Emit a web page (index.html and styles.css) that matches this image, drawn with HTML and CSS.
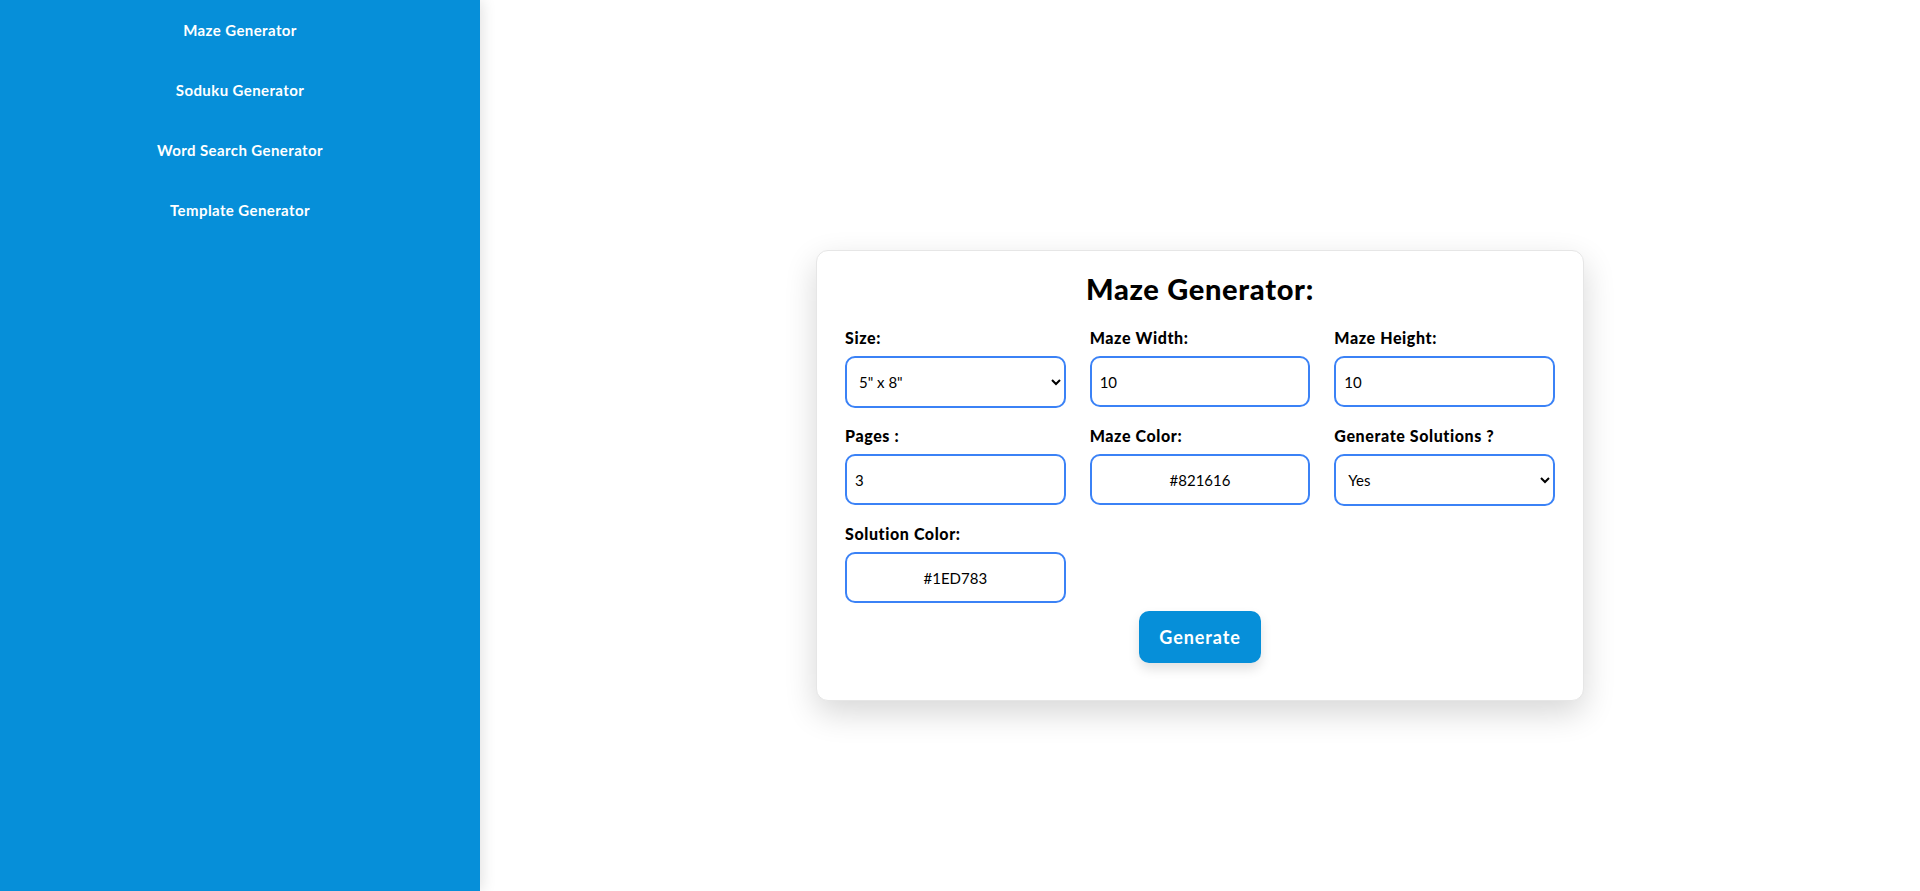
FILE: index.html
```html
<!DOCTYPE html>
<html lang="en">
<head>
<meta charset="utf-8">
<title>Maze Generator</title>
<link rel="stylesheet" href="styles.css">
</head>
<body>
<div class="app">
  <nav class="sidebar">
    <a class="nav-item" href="#">Maze Generator</a>
    <a class="nav-item" href="#">Soduku Generator</a>
    <a class="nav-item" href="#">Word Search Generator</a>
    <a class="nav-item" href="#">Template Generator</a>
  </nav>
  <main class="main">
    <form class="card">
      <h1 class="card-title">Maze Generator:</h1>
      <div class="grid">
        <div class="field">
          <label class="label">Size:</label>
          <select class="control select">
            <option>5" x 8"</option>
          </select>
        </div>
        <div class="field">
          <label class="label">Maze Width:</label>
          <input class="control" type="text" value="10">
        </div>
        <div class="field">
          <label class="label">Maze Height:</label>
          <input class="control" type="text" value="10">
        </div>
        <div class="field">
          <label class="label">Pages :</label>
          <input class="control" type="text" value="3">
        </div>
        <div class="field">
          <label class="label">Maze Color:</label>
          <input class="control center" type="text" value="#821616">
        </div>
        <div class="field">
          <label class="label">Generate Solutions ?</label>
          <select class="control select">
            <option>Yes</option>
          </select>
        </div>
        <div class="field">
          <label class="label">Solution Color:</label>
          <input class="control center" type="text" value="#1ED783">
        </div>
      </div>
      <div class="actions">
        <button class="btn" type="button">Generate</button>
      </div>
    </form>
  </main>
</div>
</body>
</html>
```

FILE: styles.css
```css
* { box-sizing: border-box; }
html, body { margin: 0; padding: 0; height: 100%; }
body {
  font-family: Lato, "Open Sans", sans-serif;
  background: #ffffff;
  color: #000;
}
.app {
  display: flex;
  height: 891px;
}
.sidebar {
  width: 480px;
  flex: 0 0 480px;
  background: #068fd9;
  display: flex;
  flex-direction: column;
  box-shadow: 2px 0 14px rgba(0, 0, 0, 0.12);
  position: relative;
  z-index: 1;
}
.nav-item {
  display: block;
  height: 60px;
  line-height: 60px;
  text-align: center;
  color: #fff;
  text-decoration: none;
  font-weight: 700;
  font-size: 15px;
  letter-spacing: 0.4px;
}
.main {
  flex: 1;
  display: flex;
  justify-content: center;
  align-items: flex-start;
  padding-top: 250px;
}
.card {
  width: 768px;
  background: #fff;
  border: 1px solid #e6e6e6;
  border-radius: 12px;
  padding: 20px 28px 37px;
  box-shadow: 0 12px 32px rgba(0, 0, 0, 0.16);
}
.card-title {
  margin: 0 0 19px;
  text-align: center;
  font-size: 29px;
  line-height: 36px;
  font-weight: 900;
  letter-spacing: 0.7px;
}
.grid {
  display: grid;
  grid-template-columns: repeat(3, 1fr);
  column-gap: 24px;
  row-gap: 16px;
}
.field {
  display: flex;
  flex-direction: column;
}
.label {
  font-size: 16px;
  line-height: 20px;
  font-weight: 900;
  padding-top: 2px;
  margin-bottom: 8px;
  letter-spacing: 0.6px;
}
.control {
  height: 51px;
  width: 100%;
  border: 2px solid #3b82f6;
  border-radius: 10px;
  background: #fff;
  font-family: Lato, "Open Sans", sans-serif;
  font-size: 15px;
  color: #000;
  padding: 0 8px;
  outline: none;
}
.select {
  padding: 0 8px;
  height: 52px;
}
.center { text-align: center; }
.actions {
  display: flex;
  justify-content: center;
  margin-top: 8px;
}
.btn {
  height: 52px;
  padding: 0 20px;
  background: #068fd9;
  color: #fff;
  border: none;
  border-radius: 10px;
  font-family: Lato, "Open Sans", sans-serif;
  font-size: 18px;
  font-weight: 700;
  letter-spacing: 0.9px;
  box-shadow: 0 6px 12px rgba(0, 0, 0, 0.12);
}
```
